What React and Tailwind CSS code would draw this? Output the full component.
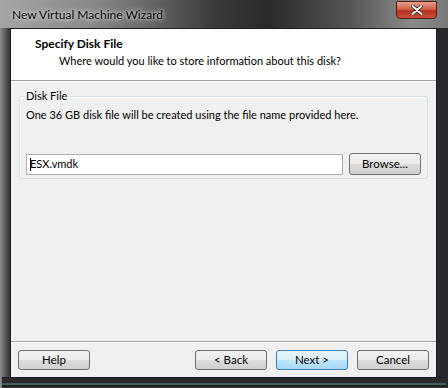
import React from 'react'

const font = { fontFamily: 'Lato, "Noto Sans", sans-serif' }

function Btn({ children, def, className = '' }) {
  return (
    <div
      className={`h-[20px] w-[72px] rounded-[3px] border flex items-center justify-center text-[11.5px] text-black ${
        def
          ? 'border-[#3c7fb1] bg-[linear-gradient(#eaf6fd_0%,#d9f0fc_50%,#bee6fd_51%,#a7d9f5_100%)]'
          : 'border-[#707070] bg-[linear-gradient(#f2f2f2_0%,#ebebeb_50%,#dddddd_51%,#cfcfcf_100%)]'
      } ${className}`}
    >
      {children}
    </div>
  )
}

export default function App() {
  return (
    <div
      className="w-[448px] h-[388px] flex flex-col bg-[linear-gradient(90deg,#8c8c8c_0%,#3a3a3a_2%,#2e2e2e_50%,#262a2c_100%)] overflow-hidden"
      style={font}
    >
      {/* title bar */}
      <div className="h-[28px] shrink-0 flex items-start bg-[linear-gradient(90deg,#a4a4a4_0%,#8a8a8a_20%,#6a6a6a_32%,#3a3a3a_48%,#2a2a2a_60%,#555_78%,#8a8a8a_92%,#7a7a7a_100%)]">
        <div className="pl-[12px] pt-[6px] text-[12px] leading-[18px] text-black [text-shadow:0_0_6px_#d8d8d8,0_0_3px_#e8e8e8]">
          New Virtual Machine Wizard
        </div>
        <div className="ml-auto mr-[11px] mt-[1px] h-[18px] w-[41px] rounded-b-[4px] border border-[#5a1a14] bg-[linear-gradient(#e8a08e_0%,#d0614a_45%,#b8301c_55%,#c8503a_100%)] flex items-center justify-center">
          <svg width="12" height="10" viewBox="0 0 12 10">
            <path d="M1.5 1 L10.5 9 M10.5 1 L1.5 9" stroke="#3a1a14" strokeWidth="3.6" strokeLinecap="round" />
            <path d="M1.5 1 L10.5 9 M10.5 1 L1.5 9" stroke="#ffffff" strokeWidth="2" strokeLinecap="round" />
          </svg>
        </div>
      </div>

      {/* client area */}
      <div className="flex-1 flex flex-col ml-[10px] mr-[11px] border border-[#1c1c1c] border-b-0 bg-[#f0f0f0]">
        {/* header */}
        <div className="h-[52px] shrink-0 bg-white border-b border-[#a0a0a0] pl-[24px] pt-[6px]">
          <div className="text-[12px] leading-[17px] font-bold text-black">Specify Disk File</div>
          <div className="pl-[24px] text-[11px] leading-[17px] text-black">
            Where would you like to store information about this disk?
          </div>
        </div>
        <div className="h-px bg-white" />

        {/* body */}
        <div className="flex-1 px-[8px] pt-[14px]">
          <div className="relative h-[83px] border border-[#d5dfe5] rounded-[3px] shadow-[inset_1px_1px_0_#fff]">
            <div className="absolute left-[4px] -top-[9px] px-[2px] bg-[#f0f0f0] text-[11px] leading-[16px] text-black">
              Disk File
            </div>
            <div className="pl-[6px] pt-[10px] text-[11px] leading-[16px] text-black">
              One 36 GB disk file will be created using the file name provided here.
            </div>
            <div className="flex items-center pl-[6px] pt-[30px]">
              <div className="h-[21px] w-[317px] bg-white border border-[#abadb3] flex items-center pl-[3px] text-[11px] text-black">
                <span className="w-px h-[13px] bg-black -mr-[1px]" />
                ESX.vmdk
              </div>
              <Btn className="ml-[6px] !h-[22px]">Browse...</Btn>
            </div>
          </div>
        </div>

        {/* footer */}
        <div className="h-px bg-[#a0a0a0]" />
        <div className="h-px bg-white" />
        <div className="h-[34px] shrink-0 flex items-start pt-[7px] px-[7px]">
          <Btn>Help</Btn>
          <Btn className="ml-auto">&lt; Back</Btn>
          <Btn def className="ml-[9px]">Next &gt;</Btn>
          <Btn className="ml-[9px]">Cancel</Btn>
        </div>
      </div>

      {/* bottom frame */}
      <div className="h-[11px] shrink-0 mx-[2px] border-t border-[#1c1c1c] bg-[linear-gradient(#2a2a2a_0%,#2a2a2a_50%,#5a8a96_60%,#1a1a1a_75%,#3a3a3a_100%)]" />
    </div>
  )
}
